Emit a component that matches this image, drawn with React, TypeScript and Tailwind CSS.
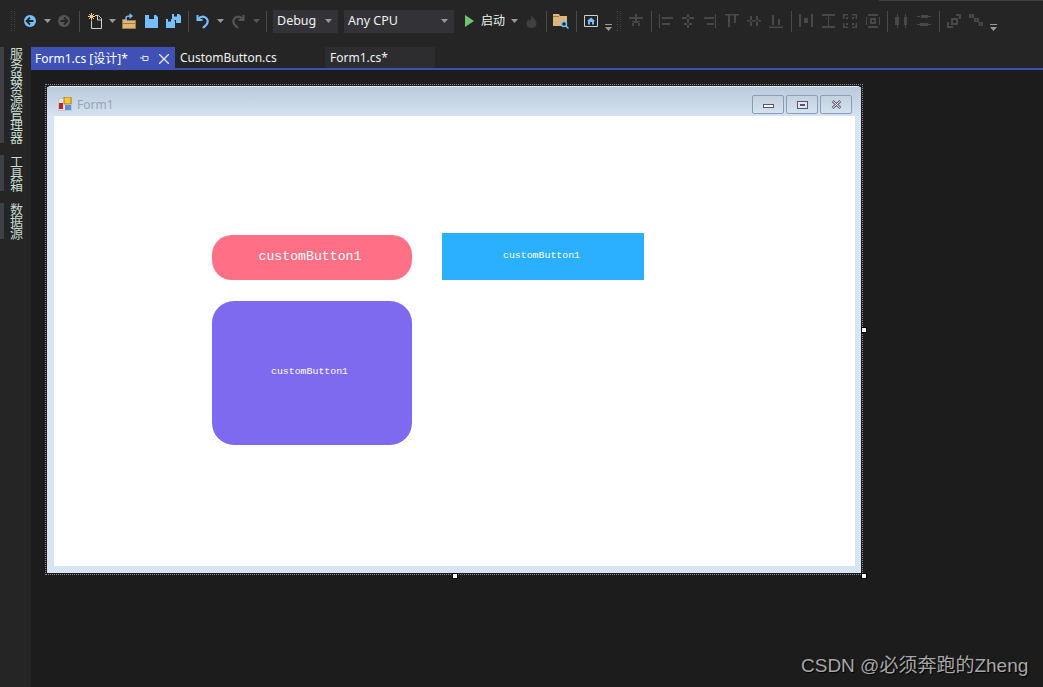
const Arrow = ({ dim = false }: { dim?: boolean }) => (
  <svg width="7" height="4" viewBox="0 0 7 4" className={dim ? 'text-[#555555]' : 'text-[#999999]'}>
    <path d="M0 0h7L3.5 4z" fill="currentColor" />
  </svg>
)

const LowArrow = () => (
  <svg width="7" height="8" viewBox="0 0 7 8" className="mt-[13px] text-[#999999]">
    <path d="M0 0h7v1H0zM0 3h7L3.5 7z" fill="currentColor" />
  </svg>
)

const Sep = () => <div className="h-[21px] w-px shrink-0 bg-[#4a4a4a]" />

const Grip = () => (
  <div className="grid h-[20px] w-[4px] shrink-0 grid-cols-2 gap-px overflow-hidden">
    {Array.from({ length: 20 }).map((_, i) => (
      <span key={i} className={`h-px w-px ${i % 3 === 0 ? 'bg-[#4a4a4a]' : 'bg-[#363636]'}`} />
    ))}
  </div>
)

const CircleArrow = ({ dir, color }: { dir: 'left' | 'right'; color: string }) => (
  <svg width="14" height="14" viewBox="0 0 14 14">
    <circle cx="7" cy="7" r="6" fill={color} />
    <path
      d={dir === 'left' ? 'M7 3.5 3.5 7 7 10.5M4 7h6.5' : 'M7 3.5 10.5 7 7 10.5M10 7H3.5'}
      stroke="#252526"
      strokeWidth="1.8"
      fill="none"
    />
  </svg>
)

const NewItem = () => (
  <svg width="15" height="16" viewBox="0 0 15 16">
    <path d="M3.5 7.500v8h10v-10l-3-3H7" fill="none" stroke="#d0d0d0" />
    <path d="M9.500 3v4h4" fill="none" stroke="#d0d0d0" />
    <path d="M3 0h1v2H3zM3 5h1v2H3zM0 3h2v1H0zM5 3h2v1H5zM1 1h1v1H1zM5 1h1v1H5zM1 5h1v1H1zM5 5h1v1H5zM2 2h3v3H2z" fill="#f0cf85" />
  </svg>
)

const OpenFolder = () => (
  <svg width="15" height="16" viewBox="0 0 15 16">
    <path d="M.5 6.500h4l1 1h8v8H.5z" fill="#dcb67a" stroke="#a67c3d" />
    <path d="M1 10h13v1H1z" fill="#a67c3d" />
    <path d="M4 7V5C4 3.500 5 3 8 3" fill="none" stroke="#75beff" strokeWidth="1.500" />
    <path d="M7.500 0 11 3 7.500 6z" fill="#75beff" />
  </svg>
)

const Save = () => (
  <svg width="13" height="13" viewBox="0 0 13 13">
    <path d="M0 0h4v4h5V0h2l2 2v11H0z" fill="#75beff" />
  </svg>
)

const SaveAll = () => (
  <svg width="15" height="14" viewBox="0 0 15 14">
    <path d="M6 0h2v2.500h3V0h2l2 2v7h-5V6H6z" fill="#75beff" />
    <path d="M0 5h2v2.500h3V5h2l2 2v7H0z" fill="#75beff" />
  </svg>
)

const Undo = ({ color, flip = false }: { color: string; flip?: boolean }) => (
  <svg width="14" height="15" viewBox="0 0 14 15" className={flip ? '-scale-x-100' : ''}>
    <path d="M1.500 1v5h5" fill="none" stroke={color} strokeWidth="2" />
    <path d="M2 5.500C4 3 6.500 2 9 3.200c3 1.500 3.500 5 1.500 7.300L7 14" fill="none" stroke={color} strokeWidth="2.200" />
  </svg>
)

const Flame = () => (
  <svg width="11" height="13" viewBox="0 0 11 13">
    <path
      d="M5 0c1 2 5 4 5.500 8C11 11 8.500 13 5.500 13S0 11 .5 8C.8 6 2 5.500 2.500 4c.8.800 1 1.500 1 2.500C4.800 5 5.500 3 5 0z"
      fill="#404040"
    />
  </svg>
)

const SearchFolder = () => (
  <svg width="16" height="16" viewBox="0 0 16 16">
    <path d="M0 1h6l1 2h7v10H0z" fill="#dcb67a" />
    <path d="M0 3h6v1H0z" fill="#a67c3d" />
    <circle cx="11" cy="11" r="2.500" fill="#252526" stroke="#75beff" strokeWidth="1.500" />
    <path d="m13 13 2.500 2.500" stroke="#75beff" strokeWidth="1.500" />
  </svg>
)

const HomeBox = () => (
  <svg width="14" height="12" viewBox="0 0 14 12">
    <path d="M.5.500h13v11H.5z" fill="none" stroke="#d0d0d0" />
    <path d="M7 2.500 11 6h-1v3.500H8V7H6v2.500H4V6H3z" fill="#75beff" />
  </svg>
)

const LAYOUT_ICONS: Record<string, string> = {
  middleV: 'M0 3h14v2H0zM6 0h2v3H6zM3 8h2v4H3zM9 8h2v4H9zM3 7h8v2H3zM6 5h2v2H6z',
  left: 'M0 0h1v14H0zM3 3h11v2H3zM3 9h8v2H3z',
  center: 'M6 0h2v14H6zM1 3h12v2H1zM3 9h8v2H3z',
  right: 'M13 0h1v14h-1zM2 3h10v2H2zM5 9h7v2H5z',
  top: 'M0 0h14v1.500H0zM3 1.500h2V13H3zM9 1.500h2V9H9z',
  middle: 'M0 6h14v1.500H0zM3 2h2v10H3zM9 2h2v10H9z',
  bottom: 'M0 12.500h14V14H0zM3 1h2v10H3zM9 5h2v6H9z',
  hspace: 'M0 0h2v13H0zM12 0h2v13h-2zM5 4h4v5H5z',
  vspace: 'M0 0h13v2H0zM0 12h13v2H0zM6 2h1v10H6zM4 4h1v1H4zM8 4h1v1H8z',
  size: 'M0 0h5v1.500H1.500V5H0zM9 0h5v5h-1.500V1.500H9zM0 9h1.500v3.500H5V14H0zM12.500 9H14v5H9v-1.500h3.500zM3 3h2v2H3zM9 3h2v2H9zM3 9h2v2H3zM9 9h2v2H9z',
  form: 'M2 0h10v2H2zM0 3h1v8H0zM13 3h1v8h-1zM2 12h10v2H2zM4 4h6v6H4zM6 6v2h2V6z',
  candle: 'M2 0h1v3H2zM0 3h4v8H0zM2 11h1v3H2zM10 0h1v3h-1zM9 3h3v8H9zM10 11h1v3h-1z',
  bars: 'M0 2h3v1H0zM11 2h3v1h-3zM4 1h7v3H4zM0 10h3v1H0zM11 10h3v1h-3zM3 9h8v3H3z',
  front: 'M9 0h5v5h-2V2H9zM4 4h7v7H4zM6 6v3h3V6zM0 8h2v4h4v2H0z',
  tree: 'M0 0h5v4H0zM2 1.500v1h1.500v-1zM5 4h5v4H5zM7 5.500v1h1.500v-1zM9.500 8H14v4H9.500zM11 9.500v1h1.500v-1z',
}

const Gray = ({ name, size = 14 }: { name: string; size?: number }) => (
  <svg width={size} height={size} viewBox="0 0 14 14" className="shrink-0">
    <path d={LAYOUT_ICONS[name]} fill="#484848" fillRule="evenodd" />
  </svg>
)

const Cell = ({ w, children }: { w: string; children: React.ReactNode }) => (
  <div className={`flex shrink-0 items-center justify-center ${w}`}>{children}</div>
)

const Combo = ({ label, w }: { label: string; w: string }) => (
  <div className={`ml-[6px] flex h-[23px] shrink-0 items-center justify-between bg-[#333337] pl-[4px] pr-[6px] text-[12.5px] text-[#f1f1f1] ${w}`}>
    <span>{label}</span>
    <Arrow />
  </div>
)

function Toolbar() {
  return (
    <div className="relative flex h-[46px] items-center bg-[#252526] pb-[4px]">
      <div className="absolute right-0 top-0 h-px w-[164px] bg-[#3f3f46]" />
      <div className="flex w-[22px] shrink-0 justify-center pl-1"><Grip /></div>
      <Cell w="w-[16px]"><CircleArrow dir="left" color="#75beff" /></Cell>
      <Cell w="w-[18px]"><Arrow /></Cell>
      <Cell w="w-[16px]"><CircleArrow dir="right" color="#555555" /></Cell>
      <Cell w="w-[15px]"><Sep /></Cell>
      <Cell w="w-[16px]"><NewItem /></Cell>
      <Cell w="w-[18px]"><Arrow /></Cell>
      <Cell w="w-[16px]"><OpenFolder /></Cell>
      <Cell w="w-[28px]"><Save /></Cell>
      <Cell w="w-[16px]"><SaveAll /></Cell>
      <Cell w="w-[14px]"><Sep /></Cell>
      <Cell w="w-[16px]"><Undo color="#75beff" /></Cell>
      <Cell w="w-[18px]"><Arrow /></Cell>
      <Cell w="w-[18px]"><Undo color="#555555" flip /></Cell>
      <Cell w="w-[18px]"><Arrow dim /></Cell>
      <div className="ml-px"><Sep /></div>
      <Combo label="Debug" w="w-[65px]" />
      <Combo label="Any CPU" w="w-[110px]" />
      <div className="flex w-[27px] shrink-0 justify-end pr-[7px]">
        <svg width="9" height="12" viewBox="0 0 9 12"><path d="M0 0l9 6-9 6z" fill="#6cc66c" /></svg>
      </div>
      <span className="w-[24px] shrink-0 text-[12px] text-[#f1f1f1]">启动</span>
      <Cell w="w-[18px]"><Arrow /></Cell>
      <Cell w="w-[16px]"><Flame /></Cell>
      <Cell w="w-[14px]"><Sep /></Cell>
      <Cell w="w-[16px]"><SearchFolder /></Cell>
      <Cell w="w-[14px]"><Sep /></Cell>
      <Cell w="w-[16px]"><HomeBox /></Cell>
      <Cell w="w-[18px]"><LowArrow /></Cell>
      <Grip />
      <Cell w="w-[30px]"><Gray name="middleV" /></Cell>
      <Sep />
      <div className="ml-[7px]"><Gray name="left" /></div>
      <div className="ml-[8px]"><Gray name="center" /></div>
      <div className="ml-[7px]"><Gray name="right" /></div>
      <div className="ml-[9px]"><Gray name="top" /></div>
      <div className="ml-[8px]"><Gray name="middle" /></div>
      <div className="ml-[8px]"><Gray name="bottom" /></div>
      <div className="ml-[8px]"><Sep /></div>
      <div className="ml-[7px]"><Gray name="hspace" /></div>
      <div className="ml-[9px]"><Gray name="vspace" /></div>
      <div className="ml-[7px]"><Gray name="size" /></div>
      <div className="ml-[9px]"><Gray name="form" /></div>
      <div className="ml-[7px]"><Sep /></div>
      <div className="ml-[7px]"><Gray name="candle" /></div>
      <div className="ml-[8px]"><Gray name="bars" /></div>
      <div className="ml-[8px]"><Sep /></div>
      <div className="ml-[7px]"><Gray name="front" /></div>
      <div className="ml-[8px]"><Gray name="tree" /></div>
      <Cell w="w-[18px] ml-px"><LowArrow /></Cell>
    </div>
  )
}

const RailTab = ({ label, h, mb }: { label: string; h: string; mb: string }) => (
  <div className={`flex ${h} ${mb}`}>
    <div className="h-full w-[4px] bg-[#3f3f46]" />
    <span className="ml-[5px] w-[14px] text-[13px] leading-[14px] tracking-[-1px] text-[#c8dccf] [writing-mode:vertical-rl]">
      {label}
    </span>
  </div>
)

function Tabs() {
  return (
    <div className="flex h-[24px] shrink-0 border-b-2 border-[#3f51b5] bg-[#252526] pt-px text-[12px] leading-[21px]">
      <div className="flex h-[23px] w-[144px] shrink-0 items-center bg-[#3f51b5] pl-[4px] text-white">
        <span>Form1.cs [设计]*</span>
        <svg width="9" height="9" viewBox="0 0 9 9" className="ml-[12px]">
          <path d="M0 4h3M3 1.500v5h5v-4H3" fill="none" stroke="#e8e8e8" />
        </svg>
        <svg width="10" height="10" viewBox="0 0 10 10" className="ml-[10px]">
          <path d="M0 0l10 10M10 0 0 10" stroke="#e8e8e8" strokeWidth="1.300" />
        </svg>
      </div>
      <div className="w-[150px] shrink-0 pl-[5px] text-[#f1f1f1]">CustomButton.cs</div>
      <div className="w-[110px] shrink-0 bg-[#2d2d30] pl-[5px] text-[#f1f1f1]">Form1.cs*</div>
    </div>
  )
}

const FormIcon = () => (
  <svg width="14" height="14" viewBox="0 0 14 14">
    <path d="M0 1h14v13H0z" fill="#c6c6c6" />
    <path d="M1 2h12v11H1z" fill="#dfe3e8" />
    <path d="M6 0h7v7H6z" fill="#f7c531" stroke="#9c6b12" strokeWidth=".8" />
    <path d="M1 6h4v6H1z" fill="#c81e1e" />
    <path d="M7 8h6v5H7z" fill="#5b8fd9" />
  </svg>
)

const WinButton = ({ children }: { children: React.ReactNode }) => (
  <div className="flex h-[19px] w-[32px] items-center justify-center rounded-[2px] border border-[#8c9db6] bg-gradient-to-b from-[#c3d1e0] to-[#d5e2f0]">
    {children}
  </div>
)

const PreviewButton = ({ className, text }: { className: string; text: string }) => (
  <div className={`flex shrink-0 items-center justify-center font-['Liberation_Mono',monospace] text-white ${className}`}>
    {text}
  </div>
)

function DesignForm() {
  return (
    <div className="relative h-[491px] w-[818px] border border-dotted border-[#8a8a8a] p-px">
      <div className="flex h-[487px] w-[814px] flex-col rounded-t-[4px] border-t border-[#e8eef4] bg-[#d6e4f3]">
        <div className="flex h-[29px] shrink-0 items-start bg-gradient-to-b from-[#bccbdc] to-[#d4e2f1] pl-[11px] pr-[9px] pt-[8px]">
          <div className="mt-[2px]"><FormIcon /></div>
          <span className="ml-[5px] mt-px text-[12px] leading-[17px] text-[#97a3b0]">Form1</span>
          <div className="ml-auto flex gap-[2px]">
            <WinButton>
              <div className="mt-[3px] h-[4px] w-[11px] border border-[#555566] bg-white" />
            </WinButton>
            <WinButton>
              <div className="flex h-[8px] w-[11px] items-center justify-center border border-[#555566] bg-[#dfe7f0]">
                <div className="h-[2px] w-[5px] bg-[#555566]" />
              </div>
            </WinButton>
            <WinButton>
              <svg width="11" height="9" viewBox="0 0 11 9">
                <path d="M1.500 1 9.500 8M9.500 1 1.500 8" stroke="#555566" strokeWidth="2.600" />
                <path d="M1.500 1 9.500 8M9.500 1 1.500 8" stroke="#ffffff" strokeWidth="1" />
              </svg>
            </WinButton>
          </div>
        </div>
        <div className="ml-[7px] flex h-[450px] w-[801px] shrink-0 items-start bg-white pl-[157.5px] pt-[117px]">
          <div className="mt-[1.5px] flex w-[200px] shrink-0 flex-col gap-[21px]">
            <PreviewButton className="h-[45px] rounded-[20px] bg-[#ff6f85] pr-[3px] text-[13.200px]" text="customButton1" />
            <PreviewButton className="h-[144px] rounded-[22px] bg-[#7e6aee] pr-[4px] text-[9.900px]" text="customButton1" />
          </div>
          <PreviewButton className="ml-[30.5px] h-[47px] w-[202px] bg-[#2ab0ff] pr-[3px] text-[9.900px]" text="customButton1" />
        </div>
      </div>
      <div className="absolute left-[815px] top-[242px] h-[6px] w-[6px] border border-black bg-white" />
      <div className="absolute left-[406px] top-[488px] h-[6px] w-[6px] border border-black bg-white" />
      <div className="absolute left-[815px] top-[488px] h-[6px] w-[6px] border border-black bg-white" />
    </div>
  )
}

export default function App() {
  return (
    <div className="relative flex h-[687px] w-[1043px] flex-col overflow-hidden bg-[#1c1c1c] font-['Noto_Sans','Noto_Sans_CJK_SC',sans-serif]">
      <Toolbar />
      <div className="flex min-h-0 flex-1">
        <div className="w-[31px] shrink-0 bg-[#252526] pt-px font-['Noto_Sans_CJK_SC',sans-serif]">
          <RailTab label="服务器资源管理器" h="h-[96px]" mb="mb-[12px]" />
          <RailTab label="工具箱" h="h-[36px]" mb="mb-[12px]" />
          <RailTab label="数据源" h="h-[36px]" mb="mb-0" />
        </div>
        <div className="flex min-w-0 flex-1 flex-col">
          <Tabs />
          <div className="pl-[14px] pt-[14px]">
            <DesignForm />
          </div>
        </div>
      </div>
      <div className="absolute left-[801px] top-[653px] whitespace-nowrap font-['Liberation_Sans','Noto_Sans_CJK_SC',sans-serif] text-[19px] leading-[26px] text-[#a8a8a8] [text-shadow:1px_1px_1px_#000000]">
        CSDN @必须奔跑的Zheng
      </div>
    </div>
  )
}
